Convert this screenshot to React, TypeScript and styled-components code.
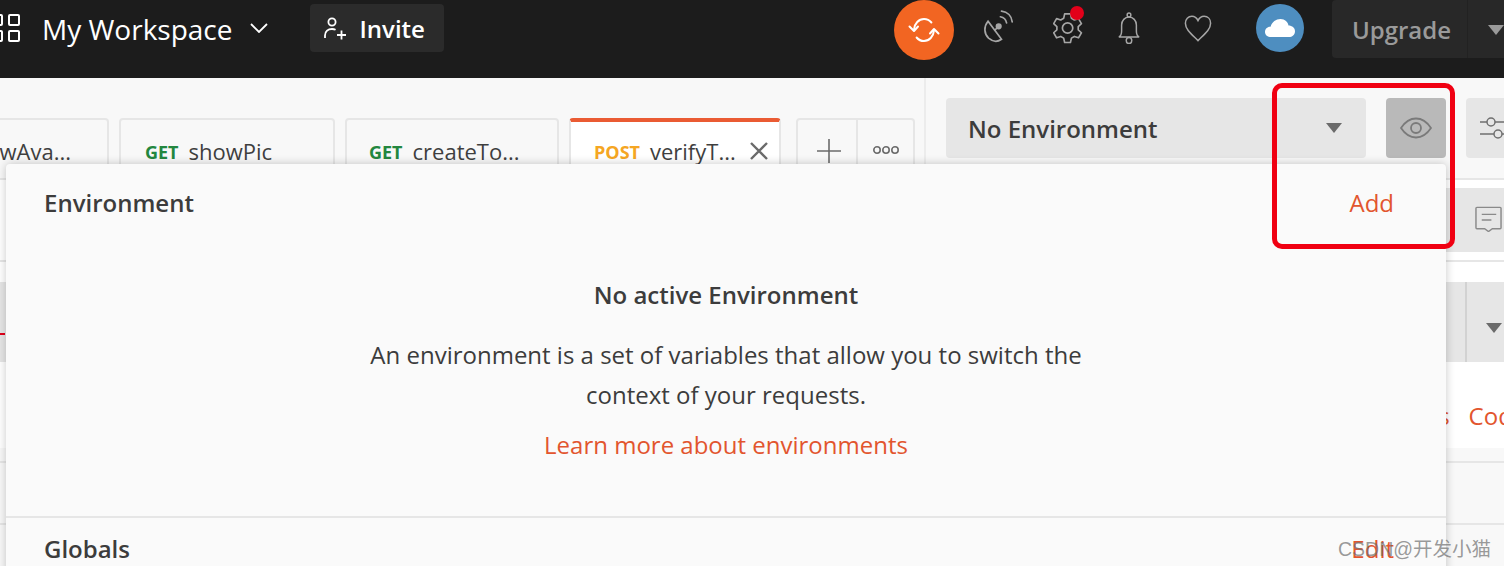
import { FC } from "react";
import styled, { createGlobalStyle } from "styled-components";

type TabData = { method: string; name: string; width: number; pad: number; active?: boolean };

const TABS: TabData[] = [
  { method: "GET", name: "showPic", width: 216, pad: 24 },
  { method: "GET", name: "createTo...", width: 214, pad: 22 },
  { method: "POST", name: "verifyT...", width: 212, pad: 23, active: true },
];

const GridIcon = () => (
  <svg width="20" height="28" viewBox="0 0 20 28" fill="none" stroke="#fff" strokeWidth="2">
    <rect x="-8" y="1" width="10" height="10" rx="1" />
    <rect x="9" y="1" width="10" height="10" rx="1" />
    <rect x="-8" y="17" width="10" height="10" rx="1" />
    <rect x="9" y="17" width="10" height="10" rx="1" />
  </svg>
);

const Chevron = () => (
  <svg width="18" height="10" viewBox="0 0 18 10" fill="none" stroke="#fff" strokeWidth="1.8">
    <path d="M1 1l8 8 8-8" />
  </svg>
);

const InviteIcon = () => (
  <svg width="22" height="24" viewBox="0 0 22 24" fill="none" stroke="#fff" strokeWidth="1.8">
    <circle cx="8" cy="6" r="3.6" />
    <path d="M1 22v-2.5c0-4 3-6.5 7-6.5 1.4 0 2.6.3 3.6.8" />
    <path d="M13 19h9M17.5 14.5v9" />
  </svg>
);

const SyncIcon = () => (
  <svg width="32" height="26" viewBox="0 0 32 26" fill="none" stroke="#fff" strokeWidth="2" strokeLinecap="round" strokeLinejoin="round">
    <path d="M6 12.500C6.500 6.500 10.800 2 16 2c3 0 5.600 1.300 7.400 3.500" />
    <path d="M26 13.500C25.500 19.500 21.200 24 16 24c-3 0-5.600-1.300-7.400-3.500" />
    <path d="M1.500 9.500L6 14l4-4.500" />
    <path d="M30.500 16.500L26 12l-4 4.500" />
  </svg>
);

const DishIcon = () => (
  <svg width="32" height="36" viewBox="0 0 28 32" fill="none" stroke="#a6a6a6" strokeWidth="1.5" strokeLinecap="round">
    <path d="M6 10c-4 5-3.500 11 .5 15 3.500 3 8 3.500 11.500 1z" />
    <path d="M12 18l3-3" />
    <circle cx="15.500" cy="14.500" r="2" fill="#a6a6a6" />
    <path d="M17 6c3 .5 5 2.500 5.500 5.500" />
    <path d="M18 1c5.500.6 9 4.500 9.500 9.500" />
  </svg>
);

const GearIcon = () => (
  <svg width="30" height="32" viewBox="0 0 30 32" fill="none" stroke="#a6a6a6" strokeWidth="1.7" strokeLinejoin="round">
    <path d="M12 2h6l1 4.500 3 1.700 4.300-1.400 3 5.200-3.300 3 .0 3.400 3.300 3-3 5.200-4.300-1.400-3 1.700-1 4.500h-6l-1-4.500-3-1.700-4.300 1.400-3-5.200 3.300-3v-3.400l-3.300-3 3-5.200 4.300 1.400 3-1.700z" transform="translate(0 0) scale(.97)" />
    <circle cx="14.600" cy="16" r="5.200" />
  </svg>
);

const BellIcon = () => (
  <svg width="24" height="32" viewBox="0 0 26 32" fill="none" preserveAspectRatio="none" stroke="#a6a6a6" strokeWidth="1.6">
    <path d="M2 25c2.500-1 3-3 3-6v-6c0-4.500 3.500-8 8-8s8 3.500 8 8v6c0 3 .5 5 3 6z" />
    <circle cx="13" cy="3" r="2" />
    <circle cx="13" cy="28.500" r="3" />
  </svg>
);

const HeartIcon = () => (
  <svg width="28" height="27" viewBox="0 0 30 28" fill="none" stroke="#a6a6a6" strokeWidth="1.6">
    <path d="M15 27C8 20 1.500 15 1.500 8.500 1.500 4 4.500 1 8.500 1c2.800 0 5 1.500 6.500 4.500C16.500 2.500 18.700 1 21.500 1c4 0 7 3 7 7.500C28.500 15 22 20 15 27z" />
  </svg>
);

const CloudIcon = () => (
  <svg width="30" height="18" viewBox="0 0 30 18" fill="#fff">
    <path d="M6 18c-3.300 0-6-2-6-5s2.500-5.500 5.500-5.200C7 3 11 0 15.500 0 20 0 23 3 23.500 6.500 27 6.500 30 8.800 30 12.200 30 15.800 27 18 24 18z" />
  </svg>
);

const EyeIcon = () => (
  <svg width="32" height="22" viewBox="0 0 32 22" fill="none" stroke="#7a7a7a" strokeWidth="1.8">
    <path d="M1 11C5 5 10 1.500 16 1.500S27 5 31 11c-4 6-9 9.500-15 9.500S5 17 1 11z" />
    <circle cx="16" cy="11" r="5" />
  </svg>
);

const SlidersIcon = () => (
  <svg width="26" height="26" viewBox="0 0 26 26" fill="none" stroke="#6f6f6f" strokeWidth="1.500">
    <path d="M0 7h7M15 7h11M0 19h14M22 19h4" />
    <circle cx="11" cy="7" r="4" />
    <circle cx="18" cy="19" r="4" />
  </svg>
);

const CommentIcon = () => (
  <svg width="27" height="26" viewBox="0 0 28 28" fill="none" preserveAspectRatio="none" stroke="#8a8a8a" strokeWidth="1.500">
    <path d="M2 1.500h24a1 1 0 0 1 1 1v21a1 1 0 0 1-1 1h-8l-4 3-4-3H2a1 1 0 0 1-1-1v-21a1 1 0 0 1 1-1z" />
    <path d="M7 9h15M7 15h10" />
  </svg>
);

const CloseIcon = () => (
  <svg width="20" height="20" viewBox="0 0 20 20" stroke="#6b6b6b" strokeWidth="2.400">
    <path d="M2 2l16 16M18 2L2 18" />
  </svg>
);

const PlusIcon = () => (
  <svg width="24" height="24" viewBox="0 0 24 24" stroke="#6b6b6b" strokeWidth="1.600">
    <path d="M0 12h24M12 0v24" />
  </svg>
);

const DotsIcon = () => (
  <svg width="28" height="10" viewBox="0 0 28 10" fill="none" stroke="#6b6b6b" strokeWidth="1.600">
    <circle cx="5" cy="5" r="3.200" />
    <circle cx="14" cy="5" r="3.200" />
    <circle cx="23" cy="5" r="3.200" />
  </svg>
);

const App: FC = () => (
  <>
    <GlobalStyle />
    <Page>
      <Header>
        <HeaderLeft>
          <GridIcon />
          <WorkspaceName>My Workspace</WorkspaceName>
          <Chevron />
          <InviteButton>
            <InviteIcon />
            Invite
          </InviteButton>
        </HeaderLeft>
        <HeaderRight>
          <SyncBadge>
            <SyncIcon />
          </SyncBadge>
          <HeaderIcon $left={27}>
            <DishIcon />
          </HeaderIcon>
          <HeaderIcon $left={40}>
            <GearIcon />
            <NotifyDot />
          </HeaderIcon>
          <HeaderIcon $left={34}>
            <BellIcon />
          </HeaderIcon>
          <HeaderIcon $left={43}>
            <HeartIcon />
          </HeaderIcon>
          <CloudBadge>
            <CloudIcon />
          </CloudBadge>
          <UpgradeButton>
            <UpgradeLabel>Upgrade</UpgradeLabel>
            <UpgradeCaret>
              <Caret $color="#9a9a9a" />
            </UpgradeCaret>
          </UpgradeButton>
        </HeaderRight>
      </Header>

      <TopSection>
        <TabArea>
          <Tab $width={109} $pad={0} $clipped>
            <TabName>wAva...</TabName>
          </Tab>
          {TABS.map((tab) => (
            <Tab key={tab.name} $width={tab.width} $pad={tab.pad} $active={tab.active}>
              <Method $post={tab.method === "POST"}>{tab.method}</Method>
              <TabName>{tab.name}</TabName>
              {tab.active && (
                <TabClose>
                  <CloseIcon />
                </TabClose>
              )}
            </Tab>
          ))}
          <TabActions>
            <TabAction>
              <PlusIcon />
            </TabAction>
            <TabAction>
              <DotsIcon />
            </TabAction>
          </TabActions>
        </TabArea>
        <EnvArea>
          <EnvSelect>
            No Environment
            <Caret $color="#6b6b6b" />
          </EnvSelect>
          <EyeButton>
            <EyeIcon />
          </EyeButton>
          <SettingsButton>
            <SlidersIcon />
          </SettingsButton>
        </EnvArea>
      </TopSection>

      <SubBar>
        <CommentBox>
          <CommentIcon />
        </CommentBox>
      </SubBar>
      <WhiteGap />
      <UrlBar>
        <UrlMark />
        <UrlBarEnd>
          <Caret $color="#6b6b6b" />
        </UrlBarEnd>
      </UrlBar>
      <LinksRow>
        <CodeLink>Cookies</CodeLink>
        <CodeLink>Code</CodeLink>
      </LinksRow>
      <EmptyRow />

      <EnvPanel>
        <PanelHead>
          <PanelTitle>Environment</PanelTitle>
          <PanelLink>Add</PanelLink>
        </PanelHead>
        <PanelBody>
          <EmptyTitle>No active Environment</EmptyTitle>
          <EmptyText>
            An environment is a set of variables that allow you to switch the
            <br />
            context of your requests.
          </EmptyText>
          <LearnLink>Learn more about environments</LearnLink>
        </PanelBody>
        <PanelFoot>
          <PanelTitle>Globals</PanelTitle>
          <PanelLink>Edit</PanelLink>
        </PanelFoot>
      </EnvPanel>

      <Highlight />
      <Watermark>CSDN@开发小猫</Watermark>
    </Page>
  </>
);

export default App;

const GlobalStyle = createGlobalStyle`
  html, body {
    margin: 0;
    padding: 0;
    height: 100%;
    overflow: hidden;
    background: #f8f8f8;
  }
  * {
    box-sizing: border-box;
  }
`;

const Page = styled.div`
  position: relative;
  width: 1504px;
  height: 566px;
  overflow: hidden;
  background: #f8f8f8;
  font-family: "Open Sans", "Noto Sans", sans-serif;
  color: #3c3c3c;
`;

const Header = styled.header`
  height: 78px;
  background: #1c1c1c;
  display: flex;
  justify-content: space-between;
  align-items: flex-start;
`;

const HeaderLeft = styled.div`
  display: flex;
  align-items: center;
  height: 56px;
`;

const WorkspaceName = styled.span`
  margin: 2px 17px 0 22px;
  color: #fff;
  font-size: 28px;
  white-space: nowrap;
`;

const InviteButton = styled.div`
  margin-left: 42px;
  width: 134px;
  height: 48px;
  padding-left: 14px;
  border-radius: 4px;
  background: #2b2b2b;
  color: #fff;
  font-size: 24px;
  font-weight: 600;
  display: flex;
  align-items: center;
  gap: 14px;
`;

const HeaderRight = styled.div`
  display: flex;
  align-items: flex-start;
`;

const SyncBadge = styled.div`
  width: 60px;
  height: 60px;
  border-radius: 50%;
  background: #f26522;
  display: flex;
  align-items: center;
  justify-content: center;
`;

const HeaderIcon = styled.div<{ $left: number }>`
  position: relative;
  margin-left: ${(props) => props.$left}px;
  height: 56px;
  display: flex;
  align-items: center;
`;

const NotifyDot = styled.span`
  position: absolute;
  top: 6px;
  right: -1px;
  width: 14px;
  height: 14px;
  border-radius: 50%;
  background: #e2001a;
`;

const CloudBadge = styled.div`
  margin: 4px 0 0 44px;
  width: 48px;
  height: 48px;
  border-radius: 50%;
  background: #4e8ec0;
  display: flex;
  align-items: center;
  justify-content: center;
`;

const UpgradeButton = styled.div`
  margin-left: 28px;
  width: 172px;
  height: 58px;
  border-radius: 4px 0 0 4px;
  background: #282828;
  display: flex;
  align-items: stretch;
`;

const UpgradeLabel = styled.div`
  width: 141px;
  border-right: 1px solid #222;
  padding: 13px 0 0 4px;
  text-align: center;
  color: #9a9a9a;
  font-size: 24px;
  font-weight: 600;
`;

const UpgradeCaret = styled.div`
  flex: 1;
  padding: 18px 0 0 20px;
`;

const Caret = styled.span<{ $color: string }>`
  display: inline-block;
  width: 0;
  height: 0;
  border-left: 8px solid transparent;
  border-right: 8px solid transparent;
  border-top: 10px solid ${(props) => props.$color};
`;

const TopSection = styled.div`
  height: 102px;
  display: flex;
  border-bottom: 2px solid #e6e6e6;
`;

const TabArea = styled.div`
  flex: none;
  width: 926px;
  border-right: 2px solid #ececec;
  padding-top: 40px;
  display: flex;
  align-items: flex-start;
  overflow: hidden;
`;

const Tab = styled.div<{ $width: number; $pad: number; $active?: boolean; $clipped?: boolean }>`
  flex: none;
  width: ${(props) => props.$width}px;
  height: 70px;
  margin-right: 10px;
  padding: 16px 0 0 ${(props) => props.$pad}px;
  border: 2px solid #e6e6e6;
  border-radius: 4px;
  background: ${(props) => (props.$active ? "#fff" : "transparent")};
  display: flex;
  align-items: flex-start;
  gap: 10px;
  font-size: 22px;
  white-space: nowrap;
  ${(props) =>
    props.$active &&
    `
    border-top: 4px solid #ea5b33;
    padding-top: 14px;
    position: relative;
  `}
  ${(props) =>
    props.$clipped &&
    `
    border-left: none;
    border-radius: 0 4px 4px 0;
    justify-content: flex-end;
    padding-right: 36px;
  `}
`;

const Method = styled.span<{ $post?: boolean }>`
  margin-top: 4px;
  font-size: 18px;
  font-weight: 700;
  color: ${(props) => (props.$post ? "#f5a623" : "#23873f")};
`;

const TabName = styled.span`
  color: #3f3f3f;
`;

const TabClose = styled.span`
  position: absolute;
  top: 15px;
  right: 10px;
`;

const TabActions = styled.div`
  flex: none;
  margin-left: 5px;
  width: 119px;
  height: 70px;
  border: 2px solid #e6e6e6;
  border-radius: 4px;
  display: flex;
`;

const TabAction = styled.div`
  height: 100%;
  padding-top: 19px;
  display: flex;
  justify-content: center;
  align-items: flex-start;
  &:first-child {
    flex: none;
    width: 60px;
    padding-left: 4px;
    border-right: 2px solid #e6e6e6;
  }
  &:last-child {
    flex: 1;
    padding-top: 25px;
  }
`;

const EnvArea = styled.div`
  flex: none;
  width: 578px;
  padding: 20px 0 0 20px;
  display: flex;
  align-items: flex-start;
  gap: 20px;
`;

const EnvSelect = styled.div`
  flex: none;
  width: 420px;
  height: 60px;
  border-radius: 4px;
  background: #e6e6e6;
  padding: 0 24px 0 22px;
  display: flex;
  align-items: center;
  justify-content: space-between;
  font-size: 24px;
  font-weight: 600;
`;

const EyeButton = styled.div`
  flex: none;
  width: 60px;
  height: 60px;
  border-radius: 4px;
  background: #b9b9b9;
  display: flex;
  align-items: center;
  justify-content: center;
`;

const SettingsButton = styled(EyeButton)`
  background: #e6e6e6;
  justify-content: flex-start;
  padding-left: 14px;
`;

const SubBar = styled.div`
  height: 82px;
  padding-top: 8px;
  background: #fff;
  border-bottom: 2px solid #e6e6e6;
`;

const CommentBox = styled.div`
  height: 64px;
  margin-left: 1446px;
  background: #e6e6e6;
  padding: 18px 0 0 29px;
`;

const WhiteGap = styled.div`
  height: 20px;
  background: #fff;
`;

const UrlBar = styled.div`
  height: 80px;
  background: #e6e6e6;
  display: flex;
  justify-content: space-between;
  align-items: flex-start;
`;

const UrlMark = styled.span`
  width: 5px;
  height: 2px;
  margin-top: 51px;
  background: #e2001a;
`;

const UrlBarEnd = styled.div`
  width: 39px;
  height: 100%;
  border-left: 2px solid #d2d2d2;
  padding: 34px 0 0 19px;
`;

const LinksRow = styled.div`
  width: 1504px;
  height: 86px;
  background: #fff;
  padding: 37px 0 0 1362px;
  display: flex;
  gap: 19px;
  font-size: 24px;
  white-space: nowrap;
  overflow: hidden;
`;

const CodeLink = styled.span`
  flex: none;
  color: #e2552e;
`;

const EmptyRow = styled.div`
  height: 64px;
  margin-top: 13px;
  border-top: 2px solid #e6e6e6;
  border-bottom: 2px solid #e6e6e6;
`;

const EnvPanel = styled.section`
  position: absolute;
  left: 6px;
  top: 164px;
  width: 1440px;
  height: 420px;
  border-radius: 4px 4px 0 0;
  background: #fafafa;
  box-shadow: 0 0 10px rgba(0, 0, 0, 0.22);
  display: flex;
  flex-direction: column;
`;

const PanelHead = styled.div`
  height: 80px;
  padding: 22px 52px 0 38px;
  display: flex;
  justify-content: space-between;
  align-items: flex-start;
  font-size: 24px;
`;

const PanelTitle = styled.div`
  font-weight: 600;
  color: #3c3c3c;
`;

const PanelLink = styled.div`
  color: #e2552e;
`;

const PanelBody = styled.div`
  height: 272px;
  padding-top: 31px;
  text-align: center;
  font-size: 24px;
  color: #3c3c3c;
`;

const EmptyTitle = styled.div`
  font-weight: 600;
  line-height: 40px;
`;

const EmptyText = styled.div`
  margin-top: 20px;
  line-height: 40px;
`;

const LearnLink = styled.div`
  margin-top: 10px;
  line-height: 40px;
  color: #e2552e;
`;

const PanelFoot = styled(PanelHead)`
  height: 68px;
  padding-top: 14px;
  border-top: 2px solid #e6e6e6;
`;

const Highlight = styled.div`
  position: absolute;
  left: 1272px;
  top: 83px;
  width: 183px;
  height: 166px;
  border: 5px solid #f00012;
  border-radius: 10px;
`;

const Watermark = styled.div`
  position: absolute;
  left: 1338px;
  top: 533px;
  font-family: "Liberation Sans", "Noto Sans CJK SC", sans-serif;
  font-size: 19.5px;
  color: rgba(110, 110, 110, 0.7);
  white-space: nowrap;
`;
